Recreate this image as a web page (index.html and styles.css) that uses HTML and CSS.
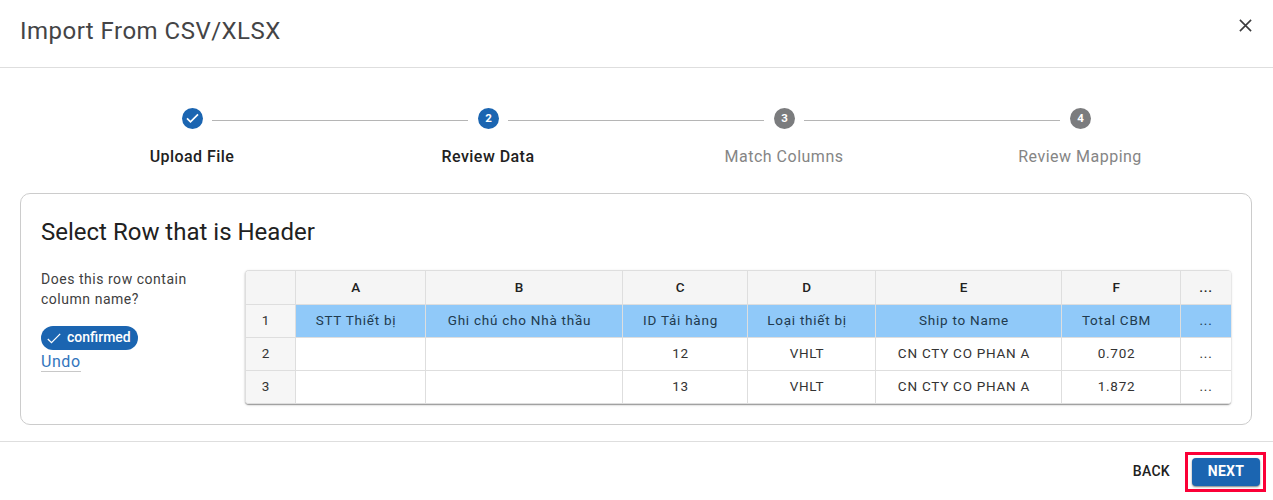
FILE: index.html
```
<!DOCTYPE html>
<html lang="en">
<head>
<meta charset="utf-8">
<title>Import From CSV/XLSX</title>
<link rel="stylesheet" href="styles.css">
</head>
<body>
<div class="dialog">
  <header class="dialog-header">
    <h1 class="dialog-title">Import From CSV/XLSX</h1>
    <button class="close" aria-label="Close">
      <svg width="13" height="13" viewBox="0 0 13 13"><path d="M0.9 0.9L12.1 12.1M12.1 0.9L0.9 12.1" stroke="#3c3c3e" stroke-width="1.6" fill="none"/></svg>
    </button>
  </header>

  <main class="dialog-body">
    <ol class="stepper">
      <li class="step active">
        <div class="step-track"><span class="rail hidden"></span><span class="step-icon"><svg width="13" height="11" viewBox="0 0 13 11"><path d="M1 5.4L4.5 8.9L12 1.4" stroke="#fff" stroke-width="1.7" fill="none"/></svg></span><span class="rail"></span></div>
        <span class="step-label">Upload File</span>
      </li>
      <li class="step active">
        <div class="step-track"><span class="rail"></span><span class="step-icon">2</span><span class="rail"></span></div>
        <span class="step-label">Review Data</span>
      </li>
      <li class="step">
        <div class="step-track"><span class="rail"></span><span class="step-icon">3</span><span class="rail"></span></div>
        <span class="step-label">Match Columns</span>
      </li>
      <li class="step">
        <div class="step-track"><span class="rail"></span><span class="step-icon">4</span><span class="rail hidden"></span></div>
        <span class="step-label">Review Mapping</span>
      </li>
    </ol>

    <section class="card">
      <h2 class="card-title">Select Row that is Header</h2>
      <div class="card-content">
        <div class="question">
          <p class="question-text">Does this row contain column name?</p>
          <span class="chip"><svg width="14" height="11" viewBox="0 0 14 11"><path d="M0.8 6L4.5 9.6L13.2 0.9" stroke="#fff" stroke-width="1.3" fill="none"/></svg>confirmed</span>
          <a class="undo">Undo</a>
        </div>
        <table class="sheet">
          <colgroup><col class="w-index"><col class="w-a"><col class="w-b"><col class="w-c"><col class="w-d"><col class="w-e"><col class="w-f"><col class="w-more"></colgroup>
          <thead>
            <tr><th></th><th>A</th><th>B</th><th>C</th><th>D</th><th>E</th><th>F</th><th class="more">...</th></tr>
          </thead>
          <tbody>
            <tr class="selected"><td class="index">1</td><td>STT Thiết bị</td><td>Ghi chú cho Nhà thầu</td><td>ID Tải hàng</td><td>Loại thiết bị</td><td>Ship to Name</td><td>Total CBM</td><td class="more">...</td></tr>
            <tr><td class="index">2</td><td></td><td></td><td>12</td><td>VHLT</td><td>CN CTY CO PHAN A</td><td>0.702</td><td class="more">...</td></tr>
            <tr><td class="index">3</td><td></td><td></td><td>13</td><td>VHLT</td><td>CN CTY CO PHAN A</td><td>1.872</td><td class="more">...</td></tr>
          </tbody>
        </table>
      </div>
    </section>
  </main>

  <footer class="dialog-footer">
    <button class="back">BACK</button>
    <div class="highlight"><button class="next">NEXT</button></div>
  </footer>
</div>
</body>
</html>
```
FILE: styles.css
```
* { box-sizing: border-box; }
body { margin: 0; background: #fff; font-family: Roboto, sans-serif; color: #212121; }
button { font-family: inherit; border: 0; padding: 0; background: none; }
svg { display: block; flex: none; }

.dialog { height: 500px; display: flex; flex-direction: column; overflow: hidden; }
.dialog-header { height: 68px; flex: none; display: flex; justify-content: space-between; padding: 15px 21px 0 20px; border-bottom: 1px solid #dedede; }
.dialog-title { margin: 0; font-size: 24px; line-height: 32px; font-weight: 400; letter-spacing: 0.48px; color: #444446; }
.close { height: 13px; margin-top: 4px; }

.dialog-body { height: 373px; flex: none; padding: 40px 21px 0 20px; }
.stepper { display: grid; grid-template-columns: repeat(4, 296px); margin: 0 0 0 24px; padding: 0; list-style: none; height: 85px; }
.step { display: flex; flex-direction: column; align-items: center; color: #858585; }
.step.active { color: #212121; }
.step-track { width: 100%; height: 21px; display: flex; align-items: center; }
.rail { flex: 1; height: 1px; margin-top: 4px; background: #b5b5b5; }
.rail.hidden { visibility: hidden; }
.step-icon { width: 21px; height: 21px; margin: 0 9px 0 10px; border-radius: 50%; background: #7b7c7e; color: #fff; font-size: 11.5px; font-weight: 700; line-height: 19px; padding-bottom: 1px; display: flex; align-items: center; justify-content: center; }
.step-icon svg { margin-top: 1px; }
.step.active .step-icon { background: #1b65b1; }
.step-label { margin-top: 16px; font-size: 16px; line-height: 24px; letter-spacing: 0.5px; }
.active .step-label { font-weight: 500; letter-spacing: 0.45px; }

.card { height: 232px; border: 1px solid #cccccc; border-radius: 10px; padding: 20px 20px 0 20px; }
.card-title { margin: 0; font-size: 24px; line-height: 36px; font-weight: 400; letter-spacing: 0; }
.card-content { display: flex; justify-content: space-between; margin-top: 20px; }
.question { width: 160px; display: flex; flex-direction: column; align-items: flex-start; }
.question-text { margin: -1px 0 17px; font-size: 14px; line-height: 20px; letter-spacing: 0.53px; color: #404040; }
.chip { display: flex; align-items: center; gap: 6px; width: 97px; height: 24px; padding: 0 0 2px 6px; border-radius: 12px; background: #1b65b1; color: #fff; font-size: 14px; font-weight: 500; }
.chip svg { margin-top: 3px; }
.undo { margin-top: 2px; font-size: 16px; line-height: 19px; letter-spacing: 0.55px; color: #3275bd; border-bottom: 1px solid #c8c8c8; }

.sheet { width: 986px; table-layout: fixed; border-collapse: separate; border-spacing: 0; border: 1px solid #dedede; border-right: 0; border-bottom: 0; border-radius: 4px; box-shadow: 0 1px 1px #999, 0 1px 3px rgba(0,0,0,.16); }
.sheet th, .sheet td { padding: 0 9px 1px 0; border-right: 1px solid #dedede; border-bottom: 1px solid #dedede; text-align: center; font-size: 13.5px; font-weight: 400; letter-spacing: 0.75px; color: #333; white-space: nowrap; }
.sheet td { height: 33px; padding-bottom: 2px; background: #fff; }
.sheet th { height: 34px; background: #f5f5f5; color: #212121; font-weight: 500; }
.sheet td.index { background: #f6f6f6; }
.sheet .selected td:not(.index) { background: #90c9f9; color: #213a4e; }
.sheet .more { padding-right: 0; border-right: 0; }
.sheet th:first-child { border-top-left-radius: 3px; }
.sheet th:last-child { border-top-right-radius: 3px; }
.sheet tr:last-child td:first-child { border-bottom-left-radius: 3px; }
.sheet tr:last-child td:last-child { border-bottom-right-radius: 3px; }
.w-index { width: 50px; } .w-a { width: 130px; } .w-b { width: 197px; } .w-c { width: 125px; }
.w-d { width: 128px; } .w-e { width: 186px; } .w-f { width: 119px; } .w-more { width: 50px; }

.dialog-footer { height: 59px; flex: none; display: flex; justify-content: flex-end; align-items: flex-start; gap: 15px; padding: 10px 7px 0 0; border-top: 1px solid #dedede; }
.back { height: 38px; font-size: 14px; font-weight: 500; letter-spacing: 0.3px; color: #212121; }
.highlight { width: 81px; height: 40px; border: 3px solid #fb0037; padding: 3px 3px 3px 4px; }
.next { display: block; width: 68px; height: 28px; border-radius: 4px; background: #1b65b1; color: #fff; font-size: 14px; font-weight: 700; letter-spacing: 0.3px; padding-bottom: 2px; box-shadow: 0 1px 2px rgba(0,0,0,.5); }
```
